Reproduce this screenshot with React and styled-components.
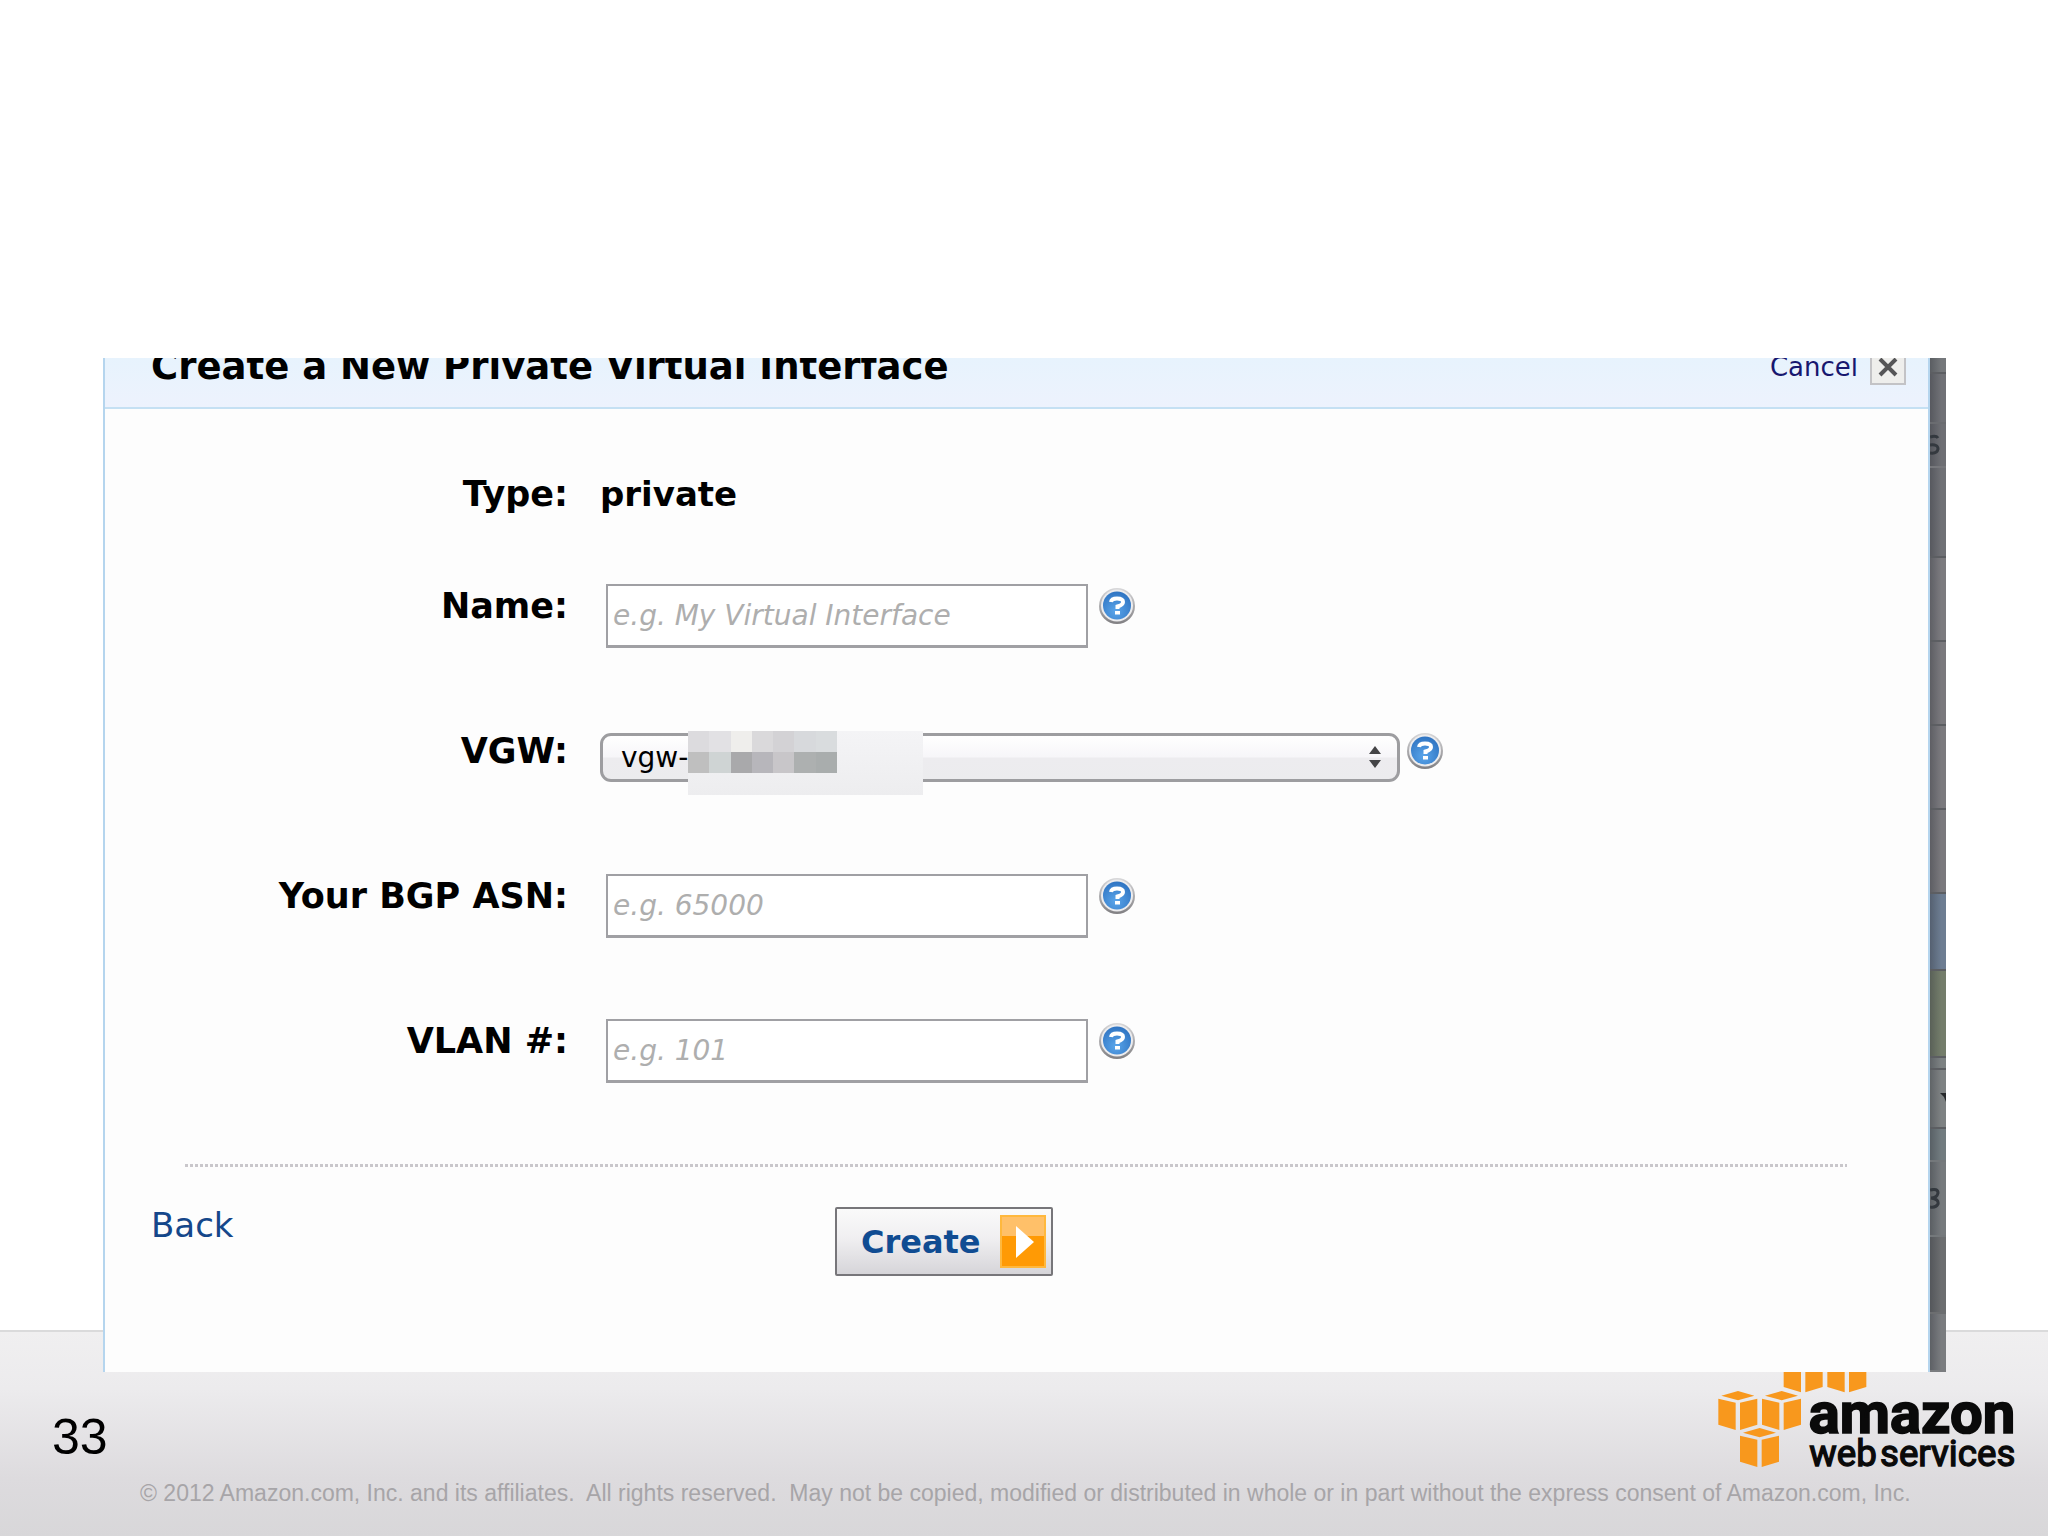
import React from "react";
import styled, { createGlobalStyle } from "styled-components";

const ui = `"DejaVu Sans", Verdana, sans-serif`;
const arial = `"Liberation Sans", Arial, sans-serif`;

const GlobalStyle = createGlobalStyle`
  *, *::before, *::after { box-sizing: border-box; }
  body { margin: 0; background: #fff; font-family: ${ui}; color: #000; }
`;

const Slide = styled.div`
  display: flex;
  flex-direction: column;
  min-height: 100vh;
  padding-top: 358px;
`;

const Capture = styled.main`
  display: flex;
  position: relative;
  z-index: 1;
  margin: 0 102px -42px 103px;
`;

const Dialog = styled.section`
  flex: 1;
  min-width: 0;
  background: #fdfdfd;
  border: solid #b5d5ee;
  border-width: 0 2px;
`;

const DialogHeader = styled.header`
  display: flex;
  align-items: flex-end;
  height: 51px;
  padding: 0 22px 22px 46px;
  overflow: hidden;
  background: linear-gradient(#e7f3fd, #edf2fd);
  border-bottom: 2px solid #c5e0f3;
`;

const Title = styled.h1`
  flex: 1;
  margin: 0;
  font-size: 37px;
  line-height: 36px;
  white-space: nowrap;
`;

const CancelLink = styled.a`
  margin-right: 12px;
  color: #17176f;
  font-size: 26px;
  line-height: 36px;
  text-decoration: none;
`;

const CloseButton = styled.button`
  display: grid;
  place-items: center;
  width: 36px;
  height: 36px;
  padding: 0;
  background: #eeeeec;
  border: 2px solid #c3c3c6;
`;

const Form = styled.form`
  padding: 63px 0 96px;
`;

const Row = styled.div`
  display: flex;
  align-items: flex-start;
  gap: 32px;
  min-height: ${(p) => (p.$short ? 44 : 64)}px;
  margin-bottom: ${(p) => (p.$short ? 68 : 81)}px;
`;

const labelText = `
  font-size: 35px;
  font-weight: bold;
  line-height: 44px;
  white-space: nowrap;
`;

const Label = styled.label`
  ${labelText}
  width: 463px;
  text-align: right;
`;

const TypeLabel = styled.span`
  ${labelText}
  width: 463px;
  text-align: right;
`;

const Value = styled.span`
  ${labelText}
  font-size: 34px;
`;

const TextField = styled.div`
  display: flex;
  gap: 10px;
  padding-left: 6px;
`;

const TextInput = styled.input`
  width: 482px;
  height: 64px;
  padding: 0 5px;
  background: #fff;
  border: 2px solid #a0a0a4;
  border-bottom-width: 3px;
  border-radius: 0;
  font: italic 28px ${ui};
  &::placeholder { color: #aeaeae; opacity: 1; }
`;

const SelectField = styled.div`
  display: flex;
  gap: 6px;
`;

const SelectBox = styled.div`
  position: relative;
  width: 800px;
  padding-top: 4px;
`;

const Select = styled.select`
  appearance: none;
  display: block;
  width: 100%;
  height: 49px;
  padding: 0 18px;
  background: linear-gradient(#fff 0%, #f7f6f9 48%, #edecef 52%, #ececee 100%);
  border: 3px solid #9d9da0;
  border-radius: 11px;
  color: #000;
  font: 28px ${ui};
`;

const Steppers = styled.svg`
  position: absolute;
  right: 18px;
  top: 16px;
  pointer-events: none;
`;

const Redaction = styled.div`
  position: absolute;
  left: 88px;
  top: 2px;
  width: 235px;
  height: 64px;
  background: linear-gradient(#f4f4f6, #ededef);
`;

const Mosaic = styled.div`
  display: grid;
  grid-template-columns: repeat(7, 1fr);
  width: 149px;
  height: 42px;
`;

const MosaicCell = styled.span`
  background: ${(p) => p.$tone};
`;

const HelpButton = styled.button`
  display: block;
  width: 38px;
  height: 44px;
  padding: 3px 0;
  background: none;
  border: 0;
`;

const Divider = styled.hr`
  height: 3px;
  margin: 0 81px 40px 80px;
  border: 0;
  background: repeating-linear-gradient(90deg, #c9c7cb 0 3px, transparent 3px 5px);
`;

const Actions = styled.div`
  display: grid;
  grid-template-columns: 684px auto;
  justify-content: start;
  align-items: start;
  padding-left: 46px;
`;

const BackLink = styled.a`
  justify-self: start;
  color: #15478a;
  font-size: 34px;
  line-height: 36px;
  text-decoration: none;
`;

const CreateButton = styled.button`
  display: flex;
  align-items: center;
  justify-content: space-between;
  width: 218px;
  height: 69px;
  padding: 0 5px 0 24px;
  background: linear-gradient(#fafafa, #f0eff1 45%, #d6d5d9);
  border: 2px solid #77767a;
  border-radius: 2px;
  color: #104c92;
  font: bold 32px/40px ${ui};
`;

const Backdrop = styled.aside`
  display: flex;
  flex-direction: column;
  width: 16px;
  overflow: hidden;
  background: #66676c;
`;

const BackdropRow = styled.div`
  display: flex;
  align-items: center;
  justify-content: ${(p) => (p.$end ? "flex-end" : "flex-start")};
  flex: ${(p) => p.$h} 0 0;
  min-height: 0;
  overflow: hidden;
  background: linear-gradient(90deg, rgba(40, 44, 52, 0.35), transparent 70%), ${(p) => p.$tone};
  border-bottom: 2px solid ${(p) => p.$line || "#5c5e62"};
`;

const Fragment = styled.svg`
  flex: none;
`;

const Footer = styled.footer`
  flex: 1;
  padding: 19px 28px 29px 52px;
  background: linear-gradient(#f0eff0, #ecebed 28%, #dddbde 72%, #d8d7d9);
  border-top: 2px solid #dadadb;
`;

const FooterTop = styled.div`
  display: flex;
  align-items: flex-end;
  justify-content: space-between;
  height: 120px;
`;

const PageNumber = styled.span`
  font: 50px/68px ${arial};
`;

const Copyright = styled.p`
  margin: 8px 0 0 88px;
  color: #a7a5a8;
  font: 23px/28px ${arial};
  white-space: pre;
`;

const tones = [
  "#dcdbde", "#e2e1e4", "#efeeec", "#dad9db", "#d3d2d5", "#d7d9dc", "#d9dcde",
  "#bfbfbf", "#cfd4d4", "#a9a9ab", "#b7b6bb", "#c8c6c9", "#adb0b0", "#a9adad",
];

const backdropRows = [
  { h: 14, tone: "#75787b" },
  { h: 50, tone: "#707176", line: "#6a6c70" },
  { h: 44, tone: "#6e6f74", mark: "s", line: "#77787c" },
  { h: 90, tone: "#707176" },
  { h: 85, tone: "#7c7b7f" },
  { h: 85, tone: "#7a797d" },
  { h: 85, tone: "#7b7a7e" },
  { h: 84, tone: "#7a797d" },
  { h: 78, tone: "#6d7d92" },
  { h: 88, tone: "#747d6b" },
  { h: 10, tone: "#7d8283" },
  { h: 59, tone: "#7e8283", mark: "caret" },
  { h: 32, tone: "#727c80", line: "#74787b" },
  { h: 76, tone: "#767a7d", mark: "3", line: "#74787b" },
  { h: 77, tone: "#6c6e70", line: "#6c6e70" },
  { h: 58, tone: "#7a7c7f", line: "#7a7c7f" },
];

function Mark({ kind }) {
  if (kind === "caret")
    return (
      <Fragment width="6" height="14" viewBox="0 0 6 14" aria-hidden="true">
        <path d="M0 2h6v9L4 6z" fill="#26282b" />
      </Fragment>
    );
  const d =
    kind === "s"
      ? "M0 3Q6 1 8 4M0 11Q8 10 8 15Q7 20 0 19"
      : "M0 2Q8 0 8 5Q7 10 1 10Q9 11 8 16Q6 20 0 19";
  return (
    <Fragment width="10" height="22" viewBox="0 0 10 22" aria-hidden="true">
      <path d={d} fill="none" stroke="#34393f" strokeWidth="3" />
    </Fragment>
  );
}

function Help({ topic }) {
  return (
    <HelpButton type="button" aria-label={`Help: ${topic}`}>
      <svg width="38" height="38" viewBox="0 0 38 38" aria-hidden="true">
        <defs>
          <linearGradient id="ring" x1="0" y1="0" x2="0" y2="1">
            <stop offset="0" stopColor="#d8d8da" />
            <stop offset="1" stopColor="#807f82" />
          </linearGradient>
          <radialGradient id="ball" cx="0.45" cy="0.7" r="0.7">
            <stop offset="0" stopColor="#5aa5ea" />
            <stop offset="1" stopColor="#2f74c2" />
          </radialGradient>
        </defs>
        <circle cx="19" cy="19" r="18" fill="url(#ring)" />
        <circle cx="19" cy="18.5" r="16" fill="#ececee" />
        <circle cx="19" cy="18.5" r="14" fill="url(#ball)" />
        <path
          d="M13 15Q13.500 11.500 19 11.500Q25 11.500 25 15Q25 18 19.500 19.500V22"
          fill="none"
          stroke="#fff"
          strokeWidth="4"
        />
        <rect x="17" y="24" width="5" height="3.500" fill="#fff" />
      </svg>
    </HelpButton>
  );
}

function Field({ id, label, placeholder }) {
  return (
    <Row>
      <Label htmlFor={id}>{label}</Label>
      <TextField>
        <TextInput id={id} type="text" placeholder={placeholder} />
        <Help topic={label} />
      </TextField>
    </Row>
  );
}

const cubes = [[0, 0], [131, 0], [65, 111], [196, -113], [327, -113]];

function Logo() {
  return (
    <svg width="304" height="120" viewBox="48 0 912 360" role="img" aria-label="amazon web services">
      {cubes.map(([x, y]) => (
        <g key={`${x}:${y}`} transform={`translate(${x} ${y})`} fill="#f8981d">
          <path d="M64 134L114 120L163 134L114 148Z" />
          <path d="M55 143L107 155V237L55 221Z" />
          <path d="M120 155L172 143V221L120 237Z" />
        </g>
      ))}
      <g fill="#0a0a0a" stroke="#0a0a0a" fontFamily="Roboto, Arial, sans-serif">
        <text x="326" y="246" fontSize="174" fontWeight="bold" strokeWidth="5">amazon</text>
        <text x="328" y="345" fontSize="110" strokeWidth="4">web</text>
        <text x="540" y="345" fontSize="110" strokeWidth="4">services</text>
      </g>
    </svg>
  );
}

export default function App() {
  return (
    <>
      <GlobalStyle />
      <Slide>
        <Capture>
          <Dialog aria-labelledby="dialog-title">
            <DialogHeader>
              <Title id="dialog-title">Create a New Private Virtual Interface</Title>
              <CancelLink href="#cancel">Cancel</CancelLink>
              <CloseButton type="button" aria-label="Close">
                <svg width="20" height="20" viewBox="0 0 20 20" aria-hidden="true">
                  <path d="M2 2L18 18M18 2L2 18" stroke="#555557" strokeWidth="4" />
                </svg>
              </CloseButton>
            </DialogHeader>
            <Form onSubmit={(e) => e.preventDefault()}>
              <Row $short>
                <TypeLabel>Type:</TypeLabel>
                <Value>private</Value>
              </Row>
              <Field id="name" label="Name:" placeholder="e.g. My Virtual Interface" />
              <Row>
                <Label htmlFor="vgw">VGW:</Label>
                <SelectField>
                  <SelectBox>
                    <Select id="vgw" defaultValue="vgw">
                      <option value="vgw">vgw-</option>
                    </Select>
                    <Redaction>
                      <Mosaic>
                        {tones.map((tone, i) => (
                          <MosaicCell key={i} $tone={tone} />
                        ))}
                      </Mosaic>
                    </Redaction>
                    <Steppers width="14" height="24" viewBox="0 0 14 24" aria-hidden="true">
                      <path d="M7 1L13 9H1ZM7 23L13 15H1Z" fill="#444446" />
                    </Steppers>
                  </SelectBox>
                  <Help topic="VGW" />
                </SelectField>
              </Row>
              <Field id="asn" label="Your BGP ASN:" placeholder="e.g. 65000" />
              <Field id="vlan" label="VLAN #:" placeholder="e.g. 101" />
              <Divider />
              <Actions>
                <BackLink href="#back">Back</BackLink>
                <CreateButton type="submit">
                  Create
                  <svg width="46" height="53" viewBox="0 0 46 53" aria-hidden="true">
                    <rect width="46" height="53" fill="#ffb83d" />
                    <rect x="2" y="2" width="42" height="20" fill="#ffc069" />
                    <rect x="2" y="21" width="42" height="30" fill="#ff9a05" />
                    <path d="M16 11L34 27L16 43Z" fill="#fff" />
                  </svg>
                </CreateButton>
              </Actions>
            </Form>
          </Dialog>
          <Backdrop aria-hidden="true">
            {backdropRows.map((r, i) => (
              <BackdropRow key={i} $h={r.h} $tone={r.tone} $line={r.line} $end={r.mark === "caret"}>
                {r.mark && <Mark kind={r.mark} />}
              </BackdropRow>
            ))}
          </Backdrop>
        </Capture>
        <Footer>
          <FooterTop>
            <PageNumber>33</PageNumber>
            <Logo />
          </FooterTop>
          <Copyright>
            {"© 2012 Amazon.com, Inc. and its affiliates.  All rights reserved.  May not be copied, modified or distributed in whole or in part without the express consent of Amazon.com, Inc."}
          </Copyright>
        </Footer>
      </Slide>
    </>
  );
}
